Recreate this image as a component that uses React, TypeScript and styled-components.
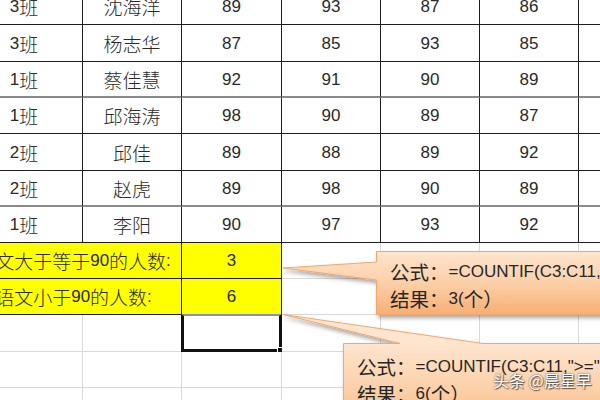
import React from "react";
import styled, { createGlobalStyle } from "styled-components";

const Global = createGlobalStyle`
  html, body { margin: 0; padding: 0; background: #fff; overflow: hidden; }
  #root { width: 600px; height: 400px; }
`;

const Page = styled.div`
  position: relative;
  width: 600px;
  height: 400px;
  overflow: hidden;
  background: #fff;
`;

const Sheet = styled.div`
  display: flex;
  flex-direction: column;
  margin-left: -34px;
  margin-top: -12px;
  width: 700px;
`;

const Row = styled.div<{ $h: number }>`
  display: grid;
  grid-template-columns: 117px 99px 100px 99px 99px 99px 87px;
  height: ${(p) => p.$h}px;
`;

type Tone = "data" | "yellow" | "blank";

const Cell = styled.div<{ $tone: Tone; $heavy?: boolean; $span?: number }>`
  position: relative;
  box-sizing: border-box;
  display: flex;
  align-items: center;
  justify-content: center;
  grid-column: span ${(p) => p.$span ?? 1};
  background: ${(p) => (p.$tone === "yellow" ? "#ffff00" : "#fff")};
  border-right: 1px solid ${(p) => (p.$tone === "blank" ? "#d9d9d9" : "#1e1e1e")};
  border-bottom: ${(p) =>
    p.$heavy
      ? "2px solid #8a8a8a"
      : `1px solid ${p.$tone === "blank" ? "#d9d9d9" : "#1e1e1e"}`};
  font-family: "Liberation Sans", "Noto Sans CJK SC", sans-serif;
  font-size: 16.5px;
  color: #2a2a2a;
  white-space: nowrap;
`;

const Han = styled.span`
  font-family: "Noto Sans CJK SC", sans-serif;
  font-size: 19px;
  font-weight: 300;
  line-height: 1;
`;

const Digits = styled.span`
  font-family: "Liberation Sans", sans-serif;
  font-size: 17px;
  line-height: 1;
`;

const Selection = styled.div`
  position: absolute;
  left: -1px;
  top: -1px;
  width: 101px;
  height: 38px;
  box-sizing: border-box;
  border: 3px solid #111;
  border-top: 2px solid #8d8dbb;
  pointer-events: none;
`;

const FillHandle = styled.div`
  position: absolute;
  right: -5px;
  bottom: -5px;
  width: 5px;
  height: 5px;
  background: #111;
  border: 1px solid #fff;
`;

const Overlay = styled.svg`
  position: absolute;
  left: 0;
  top: 0;
  width: 600px;
  height: 400px;
  pointer-events: none;
`;

const CalloutText = styled.div<{ $x: number; $y: number }>`
  position: absolute;
  left: ${(p) => p.$x}px;
  top: ${(p) => p.$y}px;
  color: #262626;
  white-space: nowrap;
`;

const Line = styled.div`
  height: 27px;
  display: flex;
  align-items: center;
`;

const CHan = styled.span`
  font-family: "Noto Sans CJK SC", sans-serif;
  font-size: 19.5px;
  line-height: 1;
`;

const Latin = styled.span`
  font-family: "Liberation Sans", sans-serif;
  font-size: 17px;
  line-height: 1;
`;

const Watermark = styled.div`
  position: absolute;
  left: 493px;
  top: 368px;
  font-family: "Noto Sans CJK SC", sans-serif;
  font-size: 16px;
  color: #fff;
  white-space: nowrap;
  text-shadow: 0 0 2px rgba(0, 0, 0, 0.75), 1px 1px 1px rgba(0, 0, 0, 0.5);
`;

const data: [string, string, string, string, string, string][] = [
  ["3", "沈海洋", "89", "93", "87", "86"],
  ["3", "杨志华", "87", "85", "93", "85"],
  ["1", "蔡佳慧", "92", "91", "90", "89"],
  ["1", "邱海涛", "98", "90", "89", "87"],
  ["2", "邱佳", "89", "88", "89", "92"],
  ["2", "赵虎", "89", "98", "90", "89"],
  ["1", "李阳", "90", "97", "93", "92"],
];
const dataHeights = [37, 37, 36, 36, 37, 36, 36];
const heavyRows = [2, 5];

const BlankCells = ({ n }: { n: number }) => (
  <>
    {Array.from({ length: n }).map((_, i) => (
      <Cell key={i} $tone="blank" />
    ))}
  </>
);

export default function App() {
  return (
    <Page>
      <Global />
      <Sheet>
        {data.map((r, i) => {
          const heavy = heavyRows.includes(i);
          return (
            <Row key={i} $h={dataHeights[i]}>
              <Cell $tone="data" $heavy={heavy}>
                <Digits>{r[0]}</Digits>
                <Han>班</Han>
              </Cell>
              <Cell $tone="data" $heavy={heavy}>
                <Han>{r[1]}</Han>
              </Cell>
              {r.slice(2).map((v, j) => (
                <Cell key={j} $tone="data" $heavy={heavy}>
                  <Digits>{v}</Digits>
                </Cell>
              ))}
              <Cell $tone="data" $heavy={heavy} />
            </Row>
          );
        })}
        <Row $h={36}>
          <Cell $tone="yellow" $span={2}>
            <Han>语文大于等于</Han>
            <Digits>90</Digits>
            <Han>的人数</Han>
            <Digits>:</Digits>
          </Cell>
          <Cell $tone="yellow">
            <Digits>3</Digits>
          </Cell>
          <BlankCells n={4} />
        </Row>
        <Row $h={36}>
          <Cell $tone="yellow" $span={2}>
            <Han>语文小于</Han>
            <Digits>90</Digits>
            <Han>的人数</Han>
            <Digits>:</Digits>
          </Cell>
          <Cell $tone="yellow">
            <Digits>6</Digits>
          </Cell>
          <BlankCells n={4} />
        </Row>
        <Row $h={37}>
          <Cell $tone="blank" />
          <Cell $tone="blank" />
          <Cell $tone="blank">
            <Selection>
              <FillHandle />
            </Selection>
          </Cell>
          <BlankCells n={4} />
        </Row>
        <Row $h={36}>
          <BlankCells n={7} />
        </Row>
        <Row $h={36}>
          <BlankCells n={7} />
        </Row>
      </Sheet>

      <Overlay viewBox="0 0 600 400">
        <defs>
          <linearGradient id="g1" gradientUnits="userSpaceOnUse" x1="0" y1="251" x2="0" y2="316">
            <stop offset="0" stopColor="#fee5cf" />
            <stop offset="0.5" stopColor="#fccfa7" />
            <stop offset="1" stopColor="#f7ad70" />
          </linearGradient>
          <linearGradient id="g2" gradientUnits="userSpaceOnUse" x1="0" y1="343" x2="0" y2="440">
            <stop offset="0" stopColor="#fee5cf" />
            <stop offset="0.5" stopColor="#fccfa7" />
            <stop offset="1" stopColor="#f7ad70" />
          </linearGradient>
          <filter id="sh" x="-10%" y="-10%" width="130%" height="140%">
            <feDropShadow dx="2" dy="3" stdDeviation="2" floodColor="#000" floodOpacity="0.35" />
          </filter>
        </defs>
        <path
          d="M376.5 251.5 L640 251.5 L640 314.5 L376.5 314.5 L376.5 280 L283 268 L376.5 262 Z"
          fill="url(#g1)"
          stroke="#f3a76a"
          strokeWidth="1"
          filter="url(#sh)"
        />
        <path
          d="M343.5 343.5 L400 343.5 L283 314.5 L483 343.5 L640 343.5 L640 440 L343.5 440 Z"
          fill="url(#g2)"
          stroke="#f3a76a"
          strokeWidth="1"
          filter="url(#sh)"
        />
      </Overlay>

      <CalloutText $x={390} $y={258}>
        <Line>
          <CHan>公式：</CHan>
          <Latin>=COUNTIF(C3:C11,"&gt;=90")</Latin>
        </Line>
        <Line>
          <CHan>结果：</CHan>
          <Latin>3(</Latin>
          <CHan>个）</CHan>
        </Line>
      </CalloutText>

      <CalloutText $x={357} $y={353}>
        <Line>
          <CHan>公式：</CHan>
          <Latin>=COUNTIF(C3:C11,"&gt;="&amp;90)</Latin>
        </Line>
        <Line>
          <CHan>结果：</CHan>
          <Latin>6(</Latin>
          <CHan>个）</CHan>
        </Line>
      </CalloutText>

      <Watermark>头条 @晨星早</Watermark>
    </Page>
  );
}
